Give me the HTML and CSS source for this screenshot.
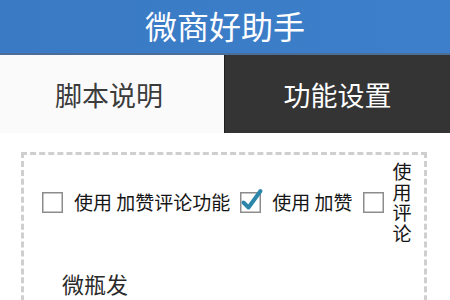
FILE: index.html
```html
<!DOCTYPE html>
<html lang="zh">
<head>
<meta charset="utf-8">
<link rel="stylesheet" href="styles.css">
</head>
<body>
<div class="header">微商好助手</div>
<div class="tabs">
  <div class="tab tab-light">脚本说明</div>
  <div class="tab tab-dark">功能设置</div>
</div>
<div class="panel">
  <div class="row">
    <div class="opt">
      <svg class="cb" width="21" height="21" viewBox="0 0 21 21"><rect x="0.75" y="0.75" width="19.5" height="19.5" fill="#fff" stroke="#8c8c8c" stroke-width="1.5"/></svg>
      <span class="lbl">使用 加赞评论功能</span>
    </div>
    <div class="opt">
      <svg class="cb" width="21" height="21" viewBox="0 0 21 21"><rect x="0.75" y="0.75" width="19.5" height="19.5" fill="#fff" stroke="#8c8c8c" stroke-width="1.5"/><path d="M3.5 10.5 L8.5 15.5 L20.5 -1" fill="none" stroke="#2c86aa" stroke-width="4" stroke-linecap="round" stroke-linejoin="round"/></svg>
      <span class="lbl">使用 加赞</span>
    </div>
    <div class="opt">
      <svg class="cb" width="21" height="21" viewBox="0 0 21 21"><rect x="0.75" y="0.75" width="19.5" height="19.5" fill="#fff" stroke="#8c8c8c" stroke-width="1.5"/></svg>
      <span class="lbl vert">使用评论</span>
    </div>
  </div>
  <div class="section">微瓶发</div>
</div>
</body>
</html>
```
FILE: styles.css
```css
html, body {
  margin: 0;
  padding: 0;
  background: #ffffff;
  font-family: "Noto Sans CJK SC", "Noto Sans", sans-serif;
  overflow: hidden;
}
.header {
  height: 55px;
  box-sizing: border-box;
  padding-bottom: 3px;
  background: linear-gradient(to right, #3a7ac5, #3d7fca);
  border-bottom: 2px solid #4c6d95;
  color: #fff;
  font-size: 32px;
  line-height: 1;
  display: flex;
  align-items: center;
  justify-content: center;
}
.tabs {
  display: flex;
  height: 78px;
}
.tab {
  display: flex;
  align-items: center;
  justify-content: center;
  font-size: 27px;
}
.tab-light {
  flex: 0 0 224px;
  box-sizing: border-box;
  padding-right: 6px;
  background: #fafafa;
  color: #3c3c3c;
}
.tab-dark {
  flex: 1;
  background: #343434;
  border-left: 1px solid #1e1e1e;
  color: #fff;
}
.panel {
  margin: 19px 23px 0 21px;
  border: 3px dashed #cfcfcf;
  border-bottom: none;
  height: 200px;
}
.row {
  display: flex;
  align-items: center;
  padding: 6px 0 0 18px;
}
.opt {
  display: flex;
  align-items: center;
  margin-right: 10px;
}
.opt:last-child {
  margin-right: 0;
}
.cb {
  flex: 0 0 21px;
  overflow: visible;
  margin-right: 11px;
}
.lbl {
  font-size: 19px;
  color: #151515;
  line-height: 20px;
  white-space: nowrap;
}
.vert {
  width: 19px;
  line-height: 20.5px;
  white-space: normal;
  word-break: break-all;
  margin-left: -2px;
}
.section {
  margin-top: 25px;
  padding-left: 38px;
  font-size: 22px;
  line-height: 30px;
  color: #2a2a2a;
}
```
